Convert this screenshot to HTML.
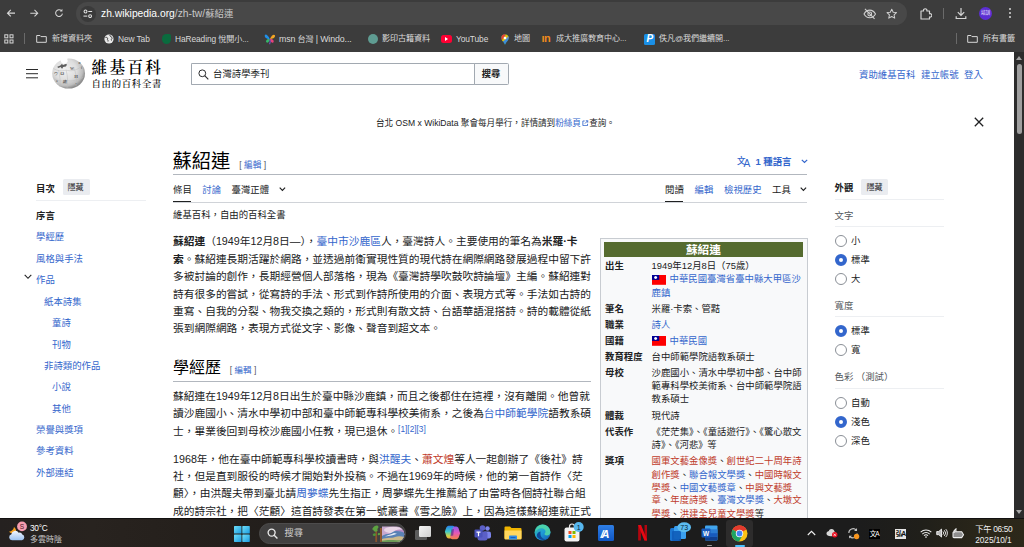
<!DOCTYPE html>
<html lang="zh-Hant">
<head>
<meta charset="utf-8">
<title>蘇紹連 - 維基百科</title>
<style>
*{box-sizing:border-box;margin:0;padding:0}
html,body{width:1024px;height:547px;overflow:hidden;background:#fff}
body{position:relative;font-family:"Liberation Sans","Noto Sans CJK TC",sans-serif;color:#202122;-webkit-font-smoothing:antialiased}
.a{position:absolute;white-space:nowrap;line-height:1}
a{color:#3366cc;text-decoration:none}
.r{color:#bf3c2c}
.b{color:#3366cc}
/* chrome */
#tb{position:absolute;left:0;top:0;width:1024px;height:51.5px;background:#3c3c3c}
#omni{position:absolute;left:76.2px;top:2px;width:831px;height:23px;border-radius:11.5px;background:#484848}
.bm{position:absolute;top:33.6px;font-size:8.1px;color:#dadada;white-space:nowrap;line-height:10px;letter-spacing:-0.1px}
/* page */
#sb{position:absolute;left:1014px;top:51.5px;width:10px;height:466px;background:#2c2c2c}
#task{position:absolute;left:0;top:517.7px;width:1024px;height:29.3px;background:linear-gradient(90deg,#252120 0%,#28231f 9%,#25201c 18%,#201d1b 35%,#1c1c1c 55%,#1c1c1c 84%,#201f1a 90%,#2a2619 96%,#2c281a 100%)}
.p{position:absolute;left:173px;font-size:10.73px;line-height:14px;white-space:nowrap}
.pl{position:absolute;left:173px;font-size:10.73px;line-height:14px;white-space:nowrap}
.toc{position:absolute;font-size:9.4px;line-height:12px;color:#3366cc;white-space:nowrap}
.ib{position:absolute;font-size:9.4px;line-height:12px;white-space:nowrap}
.ibl{font-weight:bold;left:605px}
.ibv{left:651.5px}
.rad{position:absolute;left:834.5px;width:12px;height:12px;border-radius:50%;border:1px solid #8a8f96;background:#fff}
.rad.on{border:4px solid #3366cc}
.ap{position:absolute;left:851px;font-size:9.4px;line-height:12px;white-space:nowrap}
.aph{position:absolute;left:834.5px;font-size:9.4px;line-height:12px;white-space:nowrap;color:#54595d}
.hr{position:absolute;height:1px;background:#edeff2}
</style>
</head>
<body>
<!-- ============ BROWSER CHROME ============ -->
<div id="tb">
  <svg class="a" style="left:5.600px;top:8px" width="10.300" height="10.300" viewBox="0 0 12 12"><path d="M10.5 6H2M5.6 2.2L1.8 6l3.8 3.8" fill="none" stroke="#d6d6d6" stroke-width="1.35"/></svg>
  <svg class="a" style="left:29px;top:8px" width="10.300" height="10.300" viewBox="0 0 12 12"><path d="M1.5 6H10M6.4 2.2L10.2 6 6.4 9.8" fill="none" stroke="#d6d6d6" stroke-width="1.2"/></svg>
  <svg class="a" style="left:53.800px;top:8px" width="10.200" height="10.200" viewBox="0 0 12 12"><path d="M9.9 6.6A4 4 0 1 1 8.8 3.2" fill="none" stroke="#d6d6d6" stroke-width="1.2"/><path d="M9.9 1v3H6.9z" fill="#d6d6d6"/></svg>
  <div id="omni">
    <div class="a" style="left:3.8px;top:3.5px;width:16px;height:16px;border-radius:8px;background:#3a3a3a"></div>
    <svg class="a" style="left:7px;top:6.7px" width="9.6" height="9.6" viewBox="0 0 10 10"><g fill="none" stroke="#e0e0e0" stroke-width="1.1"><circle cx="2.6" cy="2.6" r="1.5"/><path d="M5.5 2.6h4"/><circle cx="7.4" cy="7.4" r="1.5"/><path d="M.5 7.4h4"/></g></svg>
    <div class="a" style="left:24.8px;top:5px;font-size:10.3px;line-height:13px;color:#fff">zh.wikipedia.org<span style="color:#c7c7c7">/zh-tw/<span style="font-size:9.4px">蘇紹連</span></span></div>
    <!-- eye off -->
    <svg class="a" style="left:787.3px;top:6.3px" width="13.5" height="11.5" viewBox="0 0 14 12"><g fill="none" stroke="#d0d0d0" stroke-width="1.1"><path d="M1 6.2C2.6 3.4 4.6 2.2 7 2.2s4.4 1.200 6 4c-1.600 2.800-3.600 4-6 4s-4.400-1.200-6-4z"/><circle cx="7" cy="6.200" r="2"/><path d="M2 .8l10 10.600"/></g></svg>
    <!-- star -->
    <svg class="a" style="left:810px;top:6px" width="11.5" height="11.5" viewBox="0 0 12 12"><path d="M6 1.200l1.500 3.200 3.400.4-2.500 2.400.7 3.400L6 8.900l-3.100 1.700.7-3.400L1.100 4.800l3.400-.4z" fill="none" stroke="#d0d0d0" stroke-width="1.050" stroke-linejoin="round"/></svg>
  </div>
  <!-- puzzle -->
  <svg class="a" style="left:919px;top:6.500px" width="13" height="13" viewBox="0 0 13 13"><path d="M2 4h2.600a1.700 1.700 0 1 1 3.200 0h2.700v2.800a1.700 1.700 0 1 1 0 3.100V12H2z" fill="none" stroke="#d6d6d6" stroke-width="1.150" stroke-linejoin="round"/></svg>
  <div class="a" style="left:943px;top:8px;width:1px;height:11px;background:#6a6a6a"></div>
  <!-- download -->
  <svg class="a" style="left:955px;top:6.500px" width="12" height="13" viewBox="0 0 12 13"><path d="M6 1v7M2.800 5.200L6 8.400l3.200-3.200M1.200 9.300v2.200h9.600V9.300" fill="none" stroke="#d6d6d6" stroke-width="1.200"/></svg>
  <div class="a" style="left:979px;top:7px;width:13px;height:13px;border-radius:50%;background:#5b2ed3"></div>
  <div class="a" style="left:981px;top:11px;font-size:4.600px;color:#fff;letter-spacing:-0.2px">培訓</div>
  <div class="a" style="left:1008.8px;top:8px;width:2px;height:2px;border-radius:1px;background:#d6d6d6;box-shadow:0 4px 0 #d6d6d6,0 8px 0 #d6d6d6"></div>

  <!-- bookmarks bar -->
  <svg class="a" style="left:4px;top:34px" width="10" height="10" viewBox="0 0 10 10"><g fill="none" stroke="#d6d6d6" stroke-width="1"><rect x=".8" y=".8" width="3" height="3"/><rect x="6" y=".8" width="3" height="3"/><rect x=".8" y="6" width="3" height="3"/><rect x="6" y="6" width="3" height="3"/></g></svg>
  <div class="a" style="left:24px;top:33px;width:1px;height:11px;background:#6a6a6a"></div>
  <svg class="a" style="left:36px;top:34px" width="11" height="9" viewBox="0 0 11 9"><path d="M.7 1.500h3.300l1 1.100h5.300v5.700H.7z" fill="none" stroke="#d6d6d6" stroke-width="1" stroke-linejoin="round"/></svg>
  <div class="bm" style="left:52px">新增資料夾</div>
  <svg class="a" style="left:104px;top:34px" width="10" height="10" viewBox="0 0 10 10"><circle cx="5" cy="5" r="4.600" fill="#e8e8e8"/><path d="M1.500 3.500c1.500-.5 2.500.5 2 1.500s1 1 .5 2.500M6 1c-.5 1.500 1 1.500 2 2.500s-1.500 1.500-.5 3" fill="none" stroke="#3c3c3c" stroke-width="1"/></svg>
  <div class="bm" style="left:118px;font-size:8.400px">New Tab</div>
  <div class="a" style="left:162px;top:34px;width:9px;height:10px;border-radius:5px 2px 5px 5px;background:#0a6b3e"></div>
  <div class="bm" style="left:175px"><span style="font-size:8.400px">HaReading</span> 悅閱小...</div>
  <svg class="a" style="left:263.500px;top:32.500px" width="12" height="12" viewBox="0 0 12 12"><path d="M5.800 6C4 2 1.500.5.800 2.200c-.6 1.600 1.500 4 5 3.800z" fill="#1f8fe8"/><path d="M5.800 6c-3-.3-4.600 1.800-3.400 3.300 1 1.200 3-.3 3.400-3.300z" fill="#33b86a"/><path d="M6 6c1.500-4 4-5.200 4.900-3.700.8 1.500-1.400 3.900-4.900 3.700z" fill="#f5a623"/><path d="M6 6c3-.2 4.600 1.900 3.300 3.400C8.300 10.500 6.300 9 6 6z" fill="#e8437a"/><path d="M5.900 6.200c.5 2 .3 3.800-.3 5" stroke="#7a4fd0" stroke-width="1.100" fill="none"/></svg>
  <div class="bm" style="left:279px"><span style="font-size:8.800px">msn</span> 台灣 <span style="font-size:8.800px">| Windo...</span></div>
  <div class="a" style="left:367.500px;top:34px;width:10px;height:10px;border-radius:5px;background:#5f9c92"></div>
  <div class="bm" style="left:382px">影印古籍資料</div>
  <div class="a" style="left:441px;top:35px;width:11px;height:8px;border-radius:2.500px;background:#ff0033"></div>
  <div class="a" style="left:445px;top:37px;width:0;height:0;border-left:3.500px solid #fff;border-top:2px solid transparent;border-bottom:2px solid transparent"></div>
  <div class="bm" style="left:456px;font-size:8.400px">YouTube</div>
  <svg class="a" style="left:501px;top:33.500px" width="8" height="11" viewBox="0 0 8 11"><path d="M4 .3a3.700 3.700 0 0 1 3.700 3.700c0 2.500-2.700 4-3.700 6.700C3 8 .3 6.500.3 4A3.700 3.700 0 0 1 4 .3z" fill="#34a853"/><path d="M4 .3A3.700 3.700 0 0 0 .3 4c0 .8.300 1.500.7 2.200L5 .5A3.700 3.700 0 0 0 4 .3z" fill="#ea4335"/><path d="M7.700 4A3.700 3.700 0 0 0 5 .5L1 6.200c.3.500.6 1 1 1.400z" fill="#fbbc04" opacity=".9"/><path d="M7.200 2.200L4 6 2 7.600c.8 1 1.600 1.900 2 3.100 1-2.700 3.700-4.200 3.700-6.700 0-.7-.2-1.300-.5-1.800z" fill="#4285f4" opacity=".85"/><circle cx="4" cy="4" r="1.300" fill="#fff"/></svg>
  <div class="bm" style="left:514px">地圖</div>
  <div class="a" style="left:541.500px;top:33px;font-size:11px;font-weight:bold;color:#f08a1c;letter-spacing:-0.6px;line-height:10px">ın</div>
  <div class="bm" style="left:556px">成大推廣教育中心...</div>
  <div class="a" style="left:644px;top:33.500px;width:11px;height:11px;border-radius:1.500px;background:#1a8fe6"></div>
  <div class="a" style="left:646.500px;top:34px;font-size:10px;font-weight:bold;font-style:italic;color:#fff;line-height:10px">P</div>
  <div class="bm" style="left:659px">佚凡@我們繼續開...</div>
  <div class="a" style="left:956px;top:33px;width:1px;height:11px;background:#6a6a6a"></div>
  <svg class="a" style="left:966.500px;top:34px" width="11" height="9" viewBox="0 0 11 9"><path d="M.7 1.500h3.300l1 1.100h5.300v5.700H.7z" fill="none" stroke="#d6d6d6" stroke-width="1" stroke-linejoin="round"/></svg>
  <div class="bm" style="left:983px">所有書籤</div>
</div>
<!-- ============ PAGE ============ -->
<!-- header -->
<div class="a" style="left:26px;top:69px;width:12px;height:1.3px;background:#2a2a2a;box-shadow:0 4.2px 0 #2a2a2a,0 8.3px 0 #2a2a2a"></div>
<svg class="a" style="left:51px;top:57px" width="36" height="34" viewBox="0 0 36 34">
  <defs><radialGradient id="gl" cx="40%" cy="38%" r="62%"><stop offset="0" stop-color="#f1f1f1"/><stop offset=".55" stop-color="#dedede"/><stop offset=".85" stop-color="#bdbdbd"/><stop offset="1" stop-color="#8e8e8e"/></radialGradient></defs>
  <ellipse cx="17.600" cy="16.500" rx="16.400" ry="15.100" fill="url(#gl)"/>
  <path d="M10.800 0l-1.300 3 .8 2.600 2.300 1.400 2.400-.6 1.800-2.200L16.200 2l.9-2z" fill="#fff"/>
  <path d="M6.300 9.800l3-1.400 1.500-1.400 1.400 1 2.400-1 1.500.6-1.200 1.800-2.800.7-.6 1.500-1.200-.4-.4-1.100-2.800.9z" fill="#5e5e5e"/>
  <g fill="none" stroke="#bdbdbd" stroke-width=".5"><path d="M2.500 11.500c4 2.500 8 3 12.500 1.500M15 13c4 1.500 9 1 15-3M3 22c4 2 9 2.500 13 1.500M16 23.500c5 1 10 0 16-3M9 30c.5-5 0-11-1.500-17M16 31.500c1-6 .8-13-1-18.500M25 29c1-6 .3-13-2.500-19"/></g>
  <g fill="#6a6a6a" font-family="Liberation Serif,serif" font-size="4.800" font-weight="bold"><text x="9.200" y="18.300">Ω</text><text x="19" y="12.500" font-size="4">W</text><text x="23.200" y="21">И</text><text x="11.500" y="26" font-size="4.200">維</text><text x="3" y="17.500" font-size="3.600">ウ</text><text x="27.500" y="7" font-size="3.400">и</text><text x="30" y="12" font-size="3.400">វ</text><text x="5" y="25" font-size="3.400">צ</text><text x="24.500" y="27.500" font-size="3">•</text></g>
</svg>
<div class="a" style="left:91.500px;top:58.500px;font-family:'Liberation Serif','Noto Serif CJK SC',serif;font-weight:600;font-size:15.600px;line-height:18px;letter-spacing:2.350px;color:#000">維基百科</div>
<div class="a" style="left:91.500px;top:77.500px;font-family:'Liberation Serif','Noto Serif CJK SC',serif;font-weight:500;font-size:9.400px;line-height:12px;letter-spacing:.7px;color:#000">自由的百科全書</div>

<div class="a" style="left:190.500px;top:63.300px;width:284px;height:21.300px;border:1px solid #a2a9b1;border-right:none;border-radius:1.500px 0 0 1.500px;box-shadow:inset 0 0 0 .5px #fff"></div>
<svg class="a" style="left:198px;top:69px" width="11" height="11" viewBox="0 0 11 11"><circle cx="4.300" cy="4.300" r="3.400" fill="none" stroke="#2a2b2d" stroke-width="1"/><path d="M6.700 6.700l3.600 3.600" stroke="#2a2b2d" stroke-width="1.100"/></svg>
<div class="a" style="left:213px;top:68px;font-size:9.400px;line-height:12px">台灣詩學季刊</div>
<div class="a" style="left:474px;top:63.300px;width:34.500px;height:21.300px;border:1px solid #a2a9b1;border-radius:0 1.500px 1.500px 0;background:#f8f9fa"></div>
<div class="a" style="left:481.700px;top:68px;font-size:9.400px;line-height:12px;font-weight:bold">搜尋</div>

<div class="a b" style="left:859px;top:69.200px;font-size:9.400px;line-height:12px">資助維基百科</div>
<div class="a b" style="left:921px;top:69.200px;font-size:9.400px;line-height:12px">建立帳號</div>
<div class="a b" style="left:964px;top:69.200px;font-size:9.400px;line-height:12px">登入</div>

<!-- banner -->
<div class="a" style="left:376px;top:117.500px;font-size:8.580px;line-height:11px">台北 OSM x WikiData 聚會每月舉行，詳情請到<span class="b">粉絲頁</span><svg width="6.500" height="6.500" viewBox="0 0 6 6" style="margin:0 .6px 0 1.200px;vertical-align:-.8px"><path d="M2.500.9H.8v4.300h4.300V3.500M3.500.7h1.800v1.800M5.300.7L2.700 3.300" fill="none" stroke="#3366cc" stroke-width=".8"/></svg>查詢。</div>
<svg class="a" style="left:974px;top:117px" width="10" height="10" viewBox="0 0 10 10"><path d="M.8.800l8.400 8.400M9.200.8L.8 9.200" stroke="#202122" stroke-width="1.300"/></svg>
<!-- left TOC -->
<div class="a" style="left:36px;top:182.500px;font-size:9.400px;line-height:12px;font-weight:bold">目次</div>
<div class="a" style="left:62.500px;top:179px;width:27px;height:16.200px;border-radius:1.500px;background:#eaecf0"></div>
<div class="a" style="left:67.500px;top:183px;font-size:8px;line-height:10px">隱藏</div>
<div class="hr" style="left:36px;top:199.500px;width:110px"></div>
<div class="toc" style="left:36px;top:210px;color:#202122;font-weight:bold">序言</div>
<div class="toc" style="left:36px;top:231.300px">學經歷</div>
<div class="toc" style="left:36px;top:252.800px">風格與手法</div>
<svg class="a" style="left:23.500px;top:274px" width="8" height="6" viewBox="0 0 8 6"><path d="M.7.800L4 4.300 7.300.8" fill="none" stroke="#202122" stroke-width="1.100"/></svg>
<div class="toc" style="left:36px;top:274.400px">作品</div>
<div class="toc" style="left:44px;top:295.500px">紙本詩集</div>
<div class="toc" style="left:52px;top:317px">童詩</div>
<div class="toc" style="left:52px;top:338.500px">刊物</div>
<div class="toc" style="left:44px;top:359.800px">非詩類的作品</div>
<div class="toc" style="left:52px;top:381.200px">小說</div>
<div class="toc" style="left:52px;top:402.800px">其他</div>
<div class="toc" style="left:36px;top:423.800px">榮譽與獎項</div>
<div class="toc" style="left:36px;top:445.400px">參考資料</div>
<div class="toc" style="left:36px;top:467px">外部連結</div>

<!-- title -->
<div class="a" style="left:172.500px;top:149.500px;font-size:19.300px;line-height:23px;color:#000">蘇紹連</div>
<div class="a" style="left:239.300px;top:159.900px;font-size:8.600px;line-height:10px;color:#54595d">[ <span class="b">編輯</span> ]</div>
<svg class="a" style="left:736px;top:154px" width="17" height="15" viewBox="0 0 17 15"><g fill="#3366cc" font-family="Liberation Sans,Noto Sans CJK TC,sans-serif"><text x="1" y="9.700" font-size="8.600" font-weight="500">文</text><text x="7.400" y="12.600" font-size="10.200">A</text></g></svg>
<div class="a b" style="left:755.500px;top:156px;font-size:9.400px;line-height:12px;font-weight:bold">1 種語言</div>
<svg class="a" style="left:800.500px;top:159.300px" width="7" height="5" viewBox="0 0 7 5"><path d="M.8.800l2.700 2.700L6.200.8" fill="none" stroke="#3366cc" stroke-width="1.200"/></svg>
<div class="a" style="left:173px;top:174px;width:634px;height:1px;background:#b2b7be"></div>

<!-- tabs -->
<div class="a" style="left:173px;top:184px;font-size:9.400px;line-height:12px">條目</div>
<div class="a" style="left:173px;top:200.500px;width:17.800px;height:1.500px;background:#202122"></div>
<div class="a b" style="left:202.300px;top:184px;font-size:9.400px;line-height:12px">討論</div>
<div class="a" style="left:231.500px;top:184px;font-size:9.400px;line-height:12px">臺灣正體</div>
<svg class="a" style="left:278.800px;top:187.200px" width="6.800" height="4.800" viewBox="0 0 6.800 4.800"><path d="M.7.700l2.700 2.800L6.100.7" fill="none" stroke="#202122" stroke-width="1.150"/></svg>
<div class="a" style="left:665px;top:184px;font-size:9.400px;line-height:12px">閱讀</div>
<div class="a" style="left:665px;top:200.500px;width:17.800px;height:1.500px;background:#202122"></div>
<div class="a b" style="left:694.500px;top:184px;font-size:9.400px;line-height:12px">編輯</div>
<div class="a b" style="left:724px;top:184px;font-size:9.400px;line-height:12px">檢視歷史</div>
<div class="a" style="left:772px;top:184px;font-size:9.400px;line-height:12px">工具</div>
<svg class="a" style="left:799.800px;top:187.200px" width="6.800" height="4.800" viewBox="0 0 6.800 4.800"><path d="M.7.700l2.700 2.800L6.100.7" fill="none" stroke="#202122" stroke-width="1.150"/></svg>
<div class="a" style="left:173px;top:201.500px;width:634px;height:1px;background:#d0d3d8"></div>

<div class="a" style="left:173px;top:208.800px;font-size:9.400px;line-height:12px">維基百科，自由的百科全書</div>

<!-- paragraph 1 -->
<div class="p" style="top:234.400px"><b>蘇紹連</b>（1949年12月8日—），<span class="b">臺中市沙鹿區</span>人，臺灣詩人。主要使用的筆名為<b>米羅·卡</b></div>
<div class="p" style="top:251.800px"><b>索</b>。蘇紹連長期活躍於網路，並透過前衛實現性質的現代詩在網際網路發展過程中留下許</div>
<div class="p" style="top:269.200px">多被討論的創作，長期經營個人部落格，現為《臺灣詩學吹鼓吹詩論壇》主編。蘇紹連對</div>
<div class="p" style="top:286.600px">詩有很多的嘗試，從寫詩的手法、形式到作詩所使用的介面、表現方式等。手法如古詩的</div>
<div class="p" style="top:304px">重寫、自我的分裂、物我交換之類的，形式則有散文詩、台語華語混搭詩。詩的載體從紙</div>
<div class="pl" style="top:321.400px">張到網際網路，表現方式從文字、影像、聲音到超文本。</div>

<!-- h2 -->
<div class="a" style="left:173px;top:357.500px;font-size:16px;line-height:20px;color:#000">學經歷</div>
<div class="a" style="left:229.800px;top:365.200px;font-size:8.500px;line-height:10px;color:#54595d">[ <span class="b">編輯</span> ]</div>
<div class="a" style="left:173px;top:381px;width:417.500px;height:1px;background:#b2b7be"></div>

<!-- paragraph 2 -->
<div class="p" style="top:389.300px">蘇紹連在1949年12月8日出生於臺中縣沙鹿鎮，而且之後都住在這裡，沒有離開。他曾就</div>
<div class="p" style="top:406.200px">讀沙鹿國小、清水中學初中部和臺中師範專科學校美術系，之後為<span class="b">台中師範學院</span>語教系碩</div>
<div class="pl" style="top:423.500px">士，畢業後回到母校沙鹿國小任教，現已退休。<span class="b" style="font-size:8.300px;vertical-align:3.500px;line-height:1">[1][2][3]</span></div>

<!-- paragraph 3 -->
<div class="pl" style="top:451.500px">1968年，他在臺中師範專科學校讀書時，與<span class="b">洪醒夫</span>、<span class="r">蕭文煌</span>等人一起創辦了《後社》詩</div>
<div class="pl" style="top:468.700px">社，但是直到服役的時候才開始對外投稿。不過在1969年的時候，他的第一首詩作〈茫</div>
<div class="pl" style="top:486px">顧〉，由洪醒夫帶到臺北請<span class="b">周夢蝶</span>先生指正，周夢蝶先生推薦給了由當時各個詩社聯合組</div>
<div class="pl" style="top:503.500px">成的詩宗社，把〈茫顧〉這首詩發表在第一號叢書《雪之臉》上，因為這樣蘇紹連就正式</div>
<!-- infobox -->
<div class="a" style="left:600.300px;top:238px;width:207.500px;height:285px;border:1px solid #c8ccd1;background:#f8f9fa"></div>
<div class="a" style="left:603.700px;top:242.200px;width:199.500px;height:14.800px;background:#556b2f"></div>
<div class="a" style="left:603.700px;top:243.100px;width:199.500px;text-align:center;font-size:11.700px;line-height:14px;font-weight:bold;color:#fff">蘇紹連</div>
<div class="ib ibl" style="top:259.700px">出生</div>
<div class="ib ibv" style="top:259.700px">1949年12月8日（75歲）</div>
<svg class="a" style="left:651.500px;top:274.800px" width="14.500" height="9.800" viewBox="0 0 29 19.600"><rect width="29" height="19.600" fill="#fe0000"/><rect width="14.500" height="9.800" fill="#000095"/><circle cx="7.250" cy="4.900" r="3" fill="#fff"/></svg>
<div class="ib b" style="left:669.500px;top:273.400px">中華民國臺灣省臺中縣大甲區沙</div>
<div class="ib b ibv" style="top:286.500px">鹿鎮</div>
<div class="ib ibl" style="top:302.700px">筆名</div>
<div class="ib ibv" style="top:302.700px">米羅·卡索、管黠</div>
<div class="ib ibl" style="top:318.600px">職業</div>
<div class="ib ibv b" style="top:318.600px">詩人</div>
<div class="ib ibl" style="top:334.500px">國籍</div>
<svg class="a" style="left:651.500px;top:335.800px" width="14.500" height="9.800" viewBox="0 0 29 19.600"><rect width="29" height="19.600" fill="#fe0000"/><rect width="14.500" height="9.800" fill="#000095"/><circle cx="7.250" cy="4.900" r="3" fill="#fff"/></svg>
<div class="ib b" style="left:669.500px;top:334.500px">中華民國</div>
<div class="ib ibl" style="top:350.700px">教育程度</div>
<div class="ib ibv" style="top:350.700px">台中師範學院語教系碩士</div>
<div class="ib ibl" style="top:366.600px">母校</div>
<div class="ib ibv" style="top:366.600px">沙鹿國小、清水中學初中部、台中師</div>
<div class="ib ibv" style="top:379.900px">範專科學校美術系、台中師範學院語</div>
<div class="ib ibv" style="top:392.800px">教系碩士</div>
<div class="ib ibl" style="top:409.900px">體裁</div>
<div class="ib ibv" style="top:409.900px">現代詩</div>
<div class="ib ibl" style="top:425.500px">代表作</div>
<div class="ib ibv" style="top:425.500px">《茫茫集》、《童話遊行》、《驚心散文</div>
<div class="ib ibv" style="top:438.600px">詩》、《河悲》<span style="margin-left:-.6px">等</span></div>
<div class="ib ibl" style="top:454.500px">獎項</div>
<div class="ib ibv" style="top:454.500px"><span class="r">國軍文藝金像獎</span>、<span class="r">創世紀二十周年詩</span></div>
<div class="ib ibv" style="top:468.800px"><span class="r">創作獎</span>、<span class="b">聯合報文學獎</span>、<span class="r">中國時報文</span></div>
<div class="ib ibv" style="top:482px"><span class="r">學獎</span>、<span class="b">中國文藝獎章</span>、<span class="r">中興文藝獎</span></div>
<div class="ib ibv" style="top:494.300px"><span class="r">章</span>、<span class="r">年度詩獎</span>、<span class="b">臺灣文學獎</span>、<span class="r">大墩文</span></div>
<div class="ib ibv" style="top:507.700px"><span class="r">學獎</span>、<span class="r">洪建全兒童文學獎</span>等</div>

<!-- right appearance panel -->
<div class="a" style="left:834.500px;top:182.400px;font-size:9.400px;line-height:12px;font-weight:bold">外觀</div>
<div class="a" style="left:861px;top:179px;width:27px;height:16.300px;border-radius:1.500px;background:#eaecf0"></div>
<div class="a" style="left:866.500px;top:183px;font-size:8px;line-height:10px">隱藏</div>
<div class="hr" style="left:834.500px;top:199.300px;width:109.500px"></div>
<div class="aph" style="top:209.800px">文字</div>
<div class="hr" style="left:834.500px;top:225.800px;width:109.500px"></div>
<div class="rad" style="top:235.300px"></div><div class="ap" style="top:235.300px">小</div>
<div class="rad on" style="top:254px"></div><div class="ap" style="top:254px">標準</div>
<div class="rad" style="top:272.900px"></div><div class="ap" style="top:272.900px">大</div>
<div class="aph" style="top:299.800px">寬度</div>
<div class="hr" style="left:834.500px;top:316px;width:109.500px"></div>
<div class="rad on" style="top:325.400px"></div><div class="ap" style="top:325.400px">標準</div>
<div class="rad" style="top:344.300px"></div><div class="ap" style="top:344.300px">寬</div>
<div class="aph" style="top:371.200px">色彩 （測試）</div>
<div class="hr" style="left:834.500px;top:387.800px;width:109.500px"></div>
<div class="rad" style="top:397.300px"></div><div class="ap" style="top:397.300px">自動</div>
<div class="rad on" style="top:415.900px"></div><div class="ap" style="top:415.900px">淺色</div>
<div class="rad" style="top:434.600px"></div><div class="ap" style="top:434.600px">深色</div>

<!-- scrollbar -->
<div id="sb">
  <div class="a" style="left:1.500px;top:4.500px;width:0;height:0;border-left:3.500px solid transparent;border-right:3.500px solid transparent;border-bottom:4px solid #a0a0a0"></div>
  <div class="a" style="left:2.700px;top:12.200px;width:5.500px;height:70.300px;border-radius:3px;background:#9f9f9f"></div>
  <div class="a" style="left:1.800px;top:458.300px;width:0;height:0;border-left:3.300px solid transparent;border-right:3.300px solid transparent;border-top:4.800px solid #a8a8a8"></div>
</div>
<!-- ============ TASKBAR ============ -->
<div id="task">
  <div class="a" style="left:0;top:0;width:1024px;height:.8px;background:#121111"></div>
  <!-- weather -->
  <svg class="a" style="left:8px;top:3.500px" width="20" height="21" viewBox="0 0 20 21"><defs><linearGradient id="cl" x1="0" y1="0" x2="0" y2="1"><stop offset="0" stop-color="#f2f6fc"/><stop offset="1" stop-color="#9cc2f0"/></linearGradient></defs><path d="M1 10.500c2 .3 4.500-1.500 5-4.500 1.500 1 2.500 3 2 5.500-1.500 1.500-5 1.500-7-1z" fill="#f5a11f"/><circle cx="14" cy="5.400" r="4.900" fill="#f79db0"/><text x="14" y="7.800" font-size="6.500" text-anchor="middle" fill="#4a1a28" font-family="Liberation Sans,sans-serif">S</text><path d="M4 19.200a3 3 0 0 1-.6-5.900 4 4 0 0 1 7.300-1.600 3 3 0 0 1 3.600 1.900 2.900 2.900 0 0 1-.3 5.600z" fill="url(#cl)"/></svg>
  <div class="a" style="left:30px;top:5.800px;font-size:8.300px;line-height:10px;color:#fff;letter-spacing:-0.3px">30°C</div>
  <div class="a" style="left:30px;top:17.300px;font-size:8px;line-height:10px;color:#c8c8c8">多雲時陰</div>
  <!-- windows logo -->
  <svg class="a" style="left:234.300px;top:8.300px" width="15.800" height="16" viewBox="0 0 16 16"><defs><linearGradient id="wg" x1="0" y1="0" x2="1" y2="1"><stop offset="0" stop-color="#6fe0fb"/><stop offset="1" stop-color="#1a9be0"/></linearGradient></defs><g fill="url(#wg)"><rect x="0" y="0" width="7.600" height="7.600" rx=".6"/><rect x="8.400" y="0" width="7.600" height="7.600" rx=".6"/><rect x="0" y="8.400" width="7.600" height="7.600" rx=".6"/><rect x="8.400" y="8.400" width="7.600" height="7.600" rx=".6"/></g></svg>
  <!-- search pill -->
  <div class="a" style="left:259.300px;top:5px;width:147.200px;height:21.800px;border-radius:10.900px;background:#414040;border:.5px solid #4d4c4c"></div>
  <svg class="a" style="left:266.800px;top:10.300px" width="11" height="11" viewBox="0 0 10 10"><circle cx="4.200" cy="4.200" r="3.200" fill="none" stroke="#e8e8e8" stroke-width="1.200"/><path d="M6.500 6.500l3 3" stroke="#e8e8e8" stroke-width="1.300"/></svg>
  <div class="a" style="left:284.500px;top:10.500px;font-size:9.300px;line-height:11px;color:#cfcfcf">搜尋</div>
  <svg class="a" style="left:371px;top:6.500px" width="35" height="20" viewBox="0 0 35 20"><defs><clipPath id="cp"><path d="M11 2.500h14.500a7.800 7.800 0 0 1 0 15.600H11z"/></clipPath></defs><g clip-path="url(#cp)"><rect x="10" y="2" width="25" height="17" fill="#c8a8cf"/><ellipse cx="22" cy="6" rx="9" ry="3.200" fill="#ead6e6"/><ellipse cx="29" cy="8" rx="6" ry="2.500" fill="#b58cc4"/><path d="M10 13c4-4 7-2 11-4.500s8-1.500 13 .5v9H10z" fill="#5b82b5"/><path d="M14 12.500c3-2 6-1.500 9-3.500l3 .8c-4 1.500-7 2.200-12 2.700z" fill="#e9eef5"/><path d="M10 15.500c5-2.500 10-1 14-2.500s7-.5 11 .5v5H10z" fill="#cdb98a"/><path d="M10 17c5-1.500 12-1 24-.5v2.500H10z" fill="#6b9a55"/></g><rect x="4.300" y="3" width="1.800" height="15" fill="#8a532c"/><rect x="9" y="4" width="1.900" height="14" fill="#93592f"/><path d="M1.500 4.500c1.500-2.500 4-3.500 5.500-2.500 1 .8.500 2.500-1 3 1 .5 1 2-.5 2.500C4 8 2 7 2.500 6 1.500 6 1 5.200 1.500 4.500z" fill="#5da341"/><path d="M2 10c1-1 2.300-1 2.800 0s-.3 2-1.500 2S1.300 11 2 10z" fill="#4f9438"/><path d="M7 9.500c.8-.8 2-.6 2.200.3s-.7 1.500-1.600 1.400S6.500 10.200 7 9.500z" fill="#5da341"/></svg>
  <!-- task view -->
  <div class="a" style="left:415.200px;top:12px;width:12px;height:10.700px;border-radius:1.200px;background:#5c5c5c"></div>
  <div class="a" style="left:418.600px;top:8.400px;width:12.300px;height:11px;border-radius:1.200px;background:linear-gradient(135deg,#f4f4f4,#cfcfcf)"></div>
  <!-- copilot -->
  <svg class="a" style="left:444px;top:7.500px" width="17" height="15" viewBox="0 0 17 15"><defs><linearGradient id="cg1" x1="0" y1="0" x2="0" y2="1"><stop offset="0" stop-color="#2a7fe8"/><stop offset=".45" stop-color="#3fc6c9"/><stop offset=".8" stop-color="#c8d84a"/><stop offset="1" stop-color="#f2a23a"/></linearGradient><linearGradient id="cg2" x1="0" y1="0" x2="0" y2="1"><stop offset="0" stop-color="#8a5cf0"/><stop offset=".5" stop-color="#e557b8"/><stop offset="1" stop-color="#f5804a"/></linearGradient></defs><path d="M4.500.8h4.200c1.300 0 1.800.8 2.100 1.900L8.400 11.500c-.3 1.100-1 1.900-2.200 1.900H4.800c-1.500 0-2.200-.9-2.600-2.300L.9 6.800C2 3 2.700.8 4.500.8z" fill="url(#cg1)"/><path d="M12.500 14.200H8.300c-1.300 0-1.800-.8-2.100-1.900L8.600 3.500c.3-1.100 1-1.900 2.200-1.900h1.400c1.500 0 2.200.9 2.600 2.300l1.300 4.300c-1.100 3.800-1.800 6-3.600 6z" fill="url(#cg2)"/><path d="M7.300 4.500l2.600-.6-.7 6.600-2.700.5z" fill="#3b2a7a" opacity=".55"/></svg>
  <!-- teams -->
  <svg class="a" style="left:473.500px;top:7px" width="18" height="16" viewBox="0 0 18 16"><circle cx="13.500" cy="3.500" r="2.200" fill="#7b83eb"/><circle cx="8.500" cy="3" r="2.800" fill="#5b5fc7"/><rect x="9" y="6.500" width="8" height="7" rx="2" fill="#7b83eb"/><rect x="3.500" y="6.500" width="10" height="9" rx="2.500" fill="#5b5fc7"/><rect x=".5" y="4.500" width="8" height="8" rx="1" fill="#4b53bc"/><path d="M2.500 6.500h4v1.200H5.100v3.600H3.900V7.700H2.500z" fill="#fff"/></svg>
  <!-- explorer -->
  <svg class="a" style="left:503.500px;top:7px" width="18" height="16" viewBox="0 0 18 16"><path d="M.5 2.500a1 1 0 0 1 1-1h4.500l1.500 1.500h9a1 1 0 0 1 1 1V13a1 1 0 0 1-1 1h-15a1 1 0 0 1-1-1z" fill="#f0b400"/><path d="M.5 5.500h17v8a1 1 0 0 1-1 1h-15a1 1 0 0 1-1-1z" fill="#ffd75e"/><rect x="5" y="10.500" width="8" height="4" rx=".8" fill="#2f8ee8"/><rect x="6.500" y="12" width="5" height="1" fill="#1a5fb8"/></svg>
  <!-- edge -->
  <svg class="a" style="left:533.500px;top:6.500px" width="17" height="17" viewBox="0 0 17 17"><defs><linearGradient id="eg" x1="0" y1="0" x2="1" y2="1"><stop offset="0" stop-color="#37c5a0"/><stop offset=".5" stop-color="#1e9bd8"/><stop offset="1" stop-color="#1557b0"/></linearGradient></defs><circle cx="8.500" cy="8.500" r="8" fill="url(#eg)"/><path d="M8.500.5a8 8 0 0 1 8 7.500c0 2.500-2 3.500-3.500 3.500-2 0-2.500-1-2.500-1.500 0-1 1-1 1-2.500 0-1.800-1.700-3.200-4-3.200-3 0-5.500 2-6.500 4A8 8 0 0 1 8.500.5z" fill="#4fd6a8" opacity=".9"/><path d="M6.500 10c0 3 2.500 5.500 6 5a8 8 0 0 1-9-1.500C2 11.500 3 8 6.700 7.500c-.3.800-.2 1.600-.2 2.500z" fill="#0f4a9a"/></svg>
  <!-- store -->
  <svg class="a" style="left:564px;top:4px" width="20" height="21" viewBox="0 0 20 21"><path d="M5.500 6V4.500a2.500 2.500 0 0 1 5 0V6" fill="none" stroke="#e8e8e8" stroke-width="1.200"/><rect x=".5" y="5.500" width="15" height="14" rx="2" fill="#f3f3f3"/><rect x="4.500" y="9" width="3" height="3" fill="#f25022"/><rect x="8.500" y="9" width="3" height="3" fill="#7fba00"/><rect x="4.500" y="13" width="3" height="3" fill="#00a4ef"/><rect x="8.500" y="13" width="3" height="3" fill="#ffb900"/><circle cx="14.700" cy="5" r="5" fill="#57b7ee"/><text x="14.700" y="7.500" font-size="7" text-anchor="middle" fill="#06283d" font-family="Liberation Sans,sans-serif">1</text></svg>
  <!-- blue app -->
  <div class="a" style="left:598.200px;top:7.600px;width:16.300px;height:16.200px;border-radius:1.500px;background:linear-gradient(180deg,#2f7fe6,#0f56c4)"></div>
  <div class="a" style="left:600.500px;top:10px;font-size:11px;font-weight:bold;font-style:italic;color:#fff;letter-spacing:-2px;line-height:12px">/A</div>
  <!-- netflix -->
  <svg class="a" style="left:637.700px;top:7.500px" width="9.400" height="15.500" viewBox="0 0 10 17"><path d="M0 0h3v17H0zM7 0h3v17H7z" fill="#b1060f"/><path d="M0 0h3.200L10 17H6.800z" fill="#e50914"/></svg>
  <!-- phone link w/ badge -->
  <svg class="a" style="left:668.500px;top:4.300px" width="22" height="21" viewBox="0 0 22 21"><rect x="1" y="6" width="9" height="13" rx="1.500" fill="#1a74d0"/><rect x="5" y="4" width="12" height="13" rx="1.500" fill="#3aa0f0"/><rect x="3" y="9" width="9" height="10" rx="1" fill="#0f5cb8" opacity=".9"/><ellipse cx="15.200" cy="5.300" rx="6.800" ry="5" fill="#5cbcf0"/><text x="15.200" y="7.800" font-size="7" text-anchor="middle" fill="#06283d" font-family="Liberation Sans,sans-serif">73</text></svg>
  <!-- word -->
  <svg class="a" style="left:701px;top:7.500px" width="17" height="16" viewBox="0 0 17 16"><rect x="4" y=".5" width="12.500" height="15" rx="1" fill="#41a5ee"/><rect x="4" y="4.300" width="12.500" height="3.800" fill="#2b7cd3"/><rect x="4" y="8.100" width="12.500" height="3.700" fill="#185abd"/><rect x="4" y="11.800" width="12.500" height="3.700" rx="1" fill="#103f91"/><rect x=".5" y="3.500" width="9" height="9" rx="1" fill="#185abd"/><text x="5" y="10.500" font-size="6.500" font-weight="bold" text-anchor="middle" fill="#fff" font-family="Liberation Sans,sans-serif">W</text></svg>
  <div class="a" style="left:707.200px;top:27px;width:4.800px;height:1.800px;border-radius:1px;background:#9a9a9a"></div>
  <!-- chrome active -->
  <div class="a" style="left:726px;top:2.200px;width:26.500px;height:27px;border-radius:3px;background:#2d2c2c"></div>
  <svg class="a" style="left:730.800px;top:7px" width="17" height="17" viewBox="0 0 17 17"><circle cx="8.500" cy="8.500" r="8" fill="#fbc116"/><path d="M8.500 8.500L1.600 4.500A8 8 0 0 1 15.400 4.500z" fill="#e33b2e"/><path d="M8.500 8.500L1.600 4.500A8 8 0 0 0 8 16.500l3.500-6z" fill="#1fa463"/><path d="M8.500 4.500h6.900a8 8 0 0 0-13.800 0z" fill="#e33b2e"/><circle cx="8.500" cy="8.500" r="3.700" fill="#fff"/><circle cx="8.500" cy="8.500" r="2.900" fill="#4285f4"/></svg>
  <div class="a" style="left:734.500px;top:27.300px;width:10px;height:1.900px;border-radius:1px;background:#4cc2ff"></div>
  <!-- tray -->
  <svg class="a" style="left:807px;top:12.700px" width="9" height="6" viewBox="0 0 9 6"><path d="M.8 5L4.500 1.300 8.200 5" fill="none" stroke="#f0f0f0" stroke-width="1.100"/></svg>
  <svg class="a" style="left:825.500px;top:10.700px" width="12" height="10" viewBox="0 0 13 11"><ellipse cx="5.500" cy="6" rx="5" ry="3" fill="#d8d8d8"/><circle cx="6" cy="4" r="3" fill="#d8d8d8"/><circle cx="9.500" cy="7.500" r="3" fill="#e81123"/><path d="M8.300 6.300l2.400 2.400M10.700 6.300L8.300 8.700" stroke="#fff" stroke-width=".8"/></svg>
  <svg class="a" style="left:846.500px;top:9.600px" width="13" height="13" viewBox="0 0 14 14"><path d="M2 6.500A4.500 4.500 0 0 1 10 3.500M11 7A4.500 4.500 0 0 1 3 10" fill="none" stroke="#c4c4c4" stroke-width="1.200"/><path d="M10.800 1v3.200H7.600zM2.200 12.500V9.300h3.200z" fill="#c4c4c4"/><circle cx="10.300" cy="10.300" r="2.900" fill="#f7941d"/></svg>
  <div class="a" style="left:869.300px;top:11.100px;width:11px;height:10px;background:#000"></div>
  <div class="a" style="left:869.800px;top:12px;font-size:6.500px;line-height:8px;color:#fff;letter-spacing:-1px">文A</div>
  <div class="a" style="left:895.200px;top:11.100px;width:11.300px;height:10px;background:#e6e6e6"></div>
  <div class="a" style="left:895.700px;top:12px;font-size:6.800px;line-height:8px;color:#111;letter-spacing:-1.300px;font-weight:bold">弘A</div>
  <svg class="a" style="left:919.500px;top:11px" width="12" height="9.200" viewBox="0 0 13 10"><g fill="none" stroke="#f0f0f0" stroke-width="1.100"><path d="M.7 3.500a8.500 8.500 0 0 1 11.600 0M2.500 5.500a5.800 5.800 0 0 1 8 0M4.300 7.300a3.200 3.200 0 0 1 4.400 0"/></g><circle cx="6.500" cy="8.800" r=".9" fill="#f0f0f0"/></svg>
  <svg class="a" style="left:936px;top:10.700px" width="12" height="10.200" viewBox="0 0 13 11"><path d="M.8 3.800h2.200L6 1.200v8.600L3 7.200H.8z" fill="#b8b8b8" stroke="#f0f0f0" stroke-width="1"/><path d="M7.500 3.800a2.400 2.400 0 0 1 0 3.400M9 2.400a4.400 4.400 0 0 1 0 6.200M10.600 1.200a6.200 6.200 0 0 1 0 8.600" fill="none" stroke="#f0f0f0" stroke-width="1"/></svg>
  <svg class="a" style="left:951.500px;top:10.200px" width="13" height="11" viewBox="0 0 14 12"><path d="M2 4.200h8.500l2 3.100-2 3.200H2a1 1 0 0 1-1-1V5.200a1 1 0 0 1 1-1z" fill="#8f8f8f" stroke="#f0f0f0" stroke-width="1.100"/><path d="M2.200 5.500V3l2-2v3" fill="none" stroke="#f0f0f0" stroke-width="1.200"/></svg>
  <div class="a" style="left:975.200px;top:5.900px;font-size:8.300px;line-height:10px;color:#f0f0f0;letter-spacing:-0.32px">下午 06:50</div>
  <div class="a" style="left:975.200px;top:17px;font-size:8.300px;line-height:10px;color:#f0f0f0;letter-spacing:-0.05px">2025/10/1</div>
</div>
</body>
</html>
